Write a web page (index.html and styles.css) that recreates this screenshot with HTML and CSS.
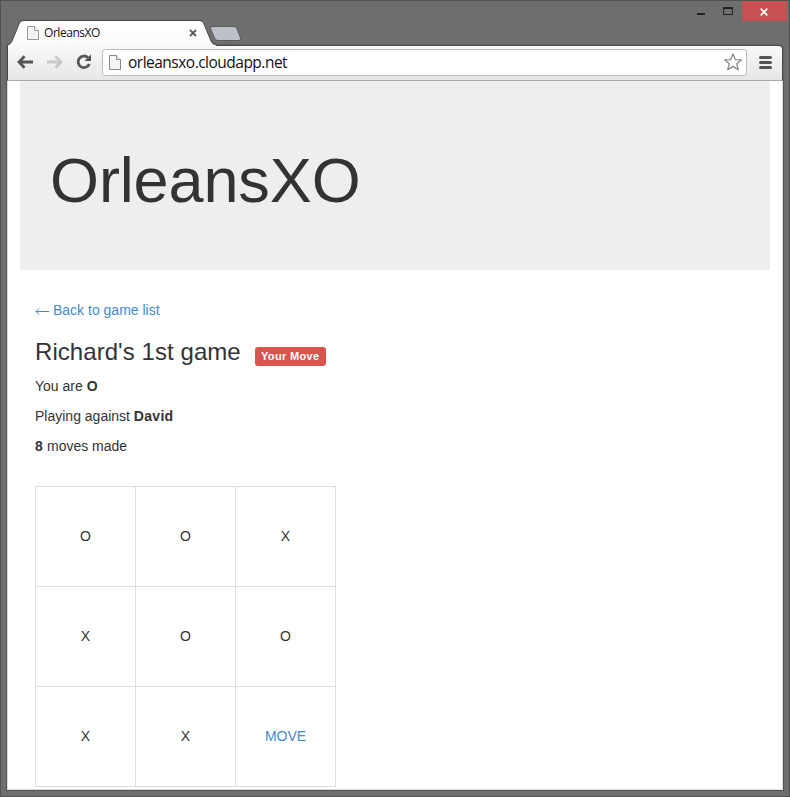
FILE: index.html
```html
<!DOCTYPE html>
<html lang="en">
<head>
<meta charset="utf-8">
<title>OrleansXO</title>
<link rel="stylesheet" href="styles.css">
</head>
<body>
<div class="window">
  <header class="titlebar">
    <div class="tab">
      <svg class="tab-shape" width="212" height="26" viewBox="0 0 212 26">
        <defs><linearGradient id="tabfill" x1="0" y1="0" x2="0" y2="1"><stop offset="0" stop-color="#fff"/><stop offset="1" stop-color="#f9f9f9"/></linearGradient></defs>
        <path d="M0 26V25Q3 24 4 21L11 4Q12 1 15 1H192Q195 1 196 4L203 21Q204.500 25 208 25V26Z" fill="url(#tabfill)"/>
        <path d="M0 25Q3 24 4 21L11 4Q12 .5 15 .5H192Q195 .5 196 4L203 21Q204.500 24.500 208 24.500" fill="none" stroke="#484848"/>
      </svg>
      <svg class="page-icon" width="12" height="14" viewBox="0 0 12 14"><path d="M.5.5H7.500L11.500 4.500V13.500H.5Z" fill="#f4f4f4" stroke="#999"/><path d="M7.500.5V4.500H11.500" fill="#fff" stroke="#999"/></svg>
      <span class="tab-title">OrleansXO</span>
      <svg class="tab-close" width="8" height="8" viewBox="0 0 8 8"><path d="M1 1L7 7M7 1L1 7" stroke="#5c5c5c" stroke-width="1.800"/></svg>
    </div>
    <svg class="new-tab" width="33" height="17" viewBox="0 0 33 17"><path d="M4 1.500H25Q27 1.500 28 3.500L31.500 13Q32 15.500 30 15.500H9Q6.500 15.500 5.500 13L1.500 3.500Q1 1.500 4 1.500Z" fill="#bbc0c8" stroke="#5c5c5c"/></svg>
    <div class="controls">
      <svg width="46" height="20" viewBox="0 0 46 20"><path d="M0 12H8V14H0Z" fill="#222"/><path d="M26.500 7.500H35.500V13.500H26.500Z" fill="none" stroke="#222"/><path d="M26 7H36" stroke="#222" stroke-width="2"/></svg>
      <div class="close"><svg width="8" height="8" viewBox="0 0 8 8"><path d="M.7.7L7.300 7.300M7.300.7L.7 7.300" stroke="#fff" stroke-width="1.800"/></svg></div>
    </div>
  </header>
  <nav class="toolbar">
    <svg class="nav-icons" width="80" height="20" viewBox="0 0 80 20">
      <path d="M7.500 4.300L2 10L7.500 15.700M2.500 10H16" fill="none" stroke="#555" stroke-width="2.800"/>
      <path d="M38.500 4.300L44 10L38.500 15.700M43.500 10H30" fill="none" stroke="#c8c8c8" stroke-width="2.800"/>
      <path d="M71 5.700A5.800 5.800 0 1 0 72.300 12" fill="none" stroke="#555" stroke-width="2.800"/><path d="M74 2.500V9H67.500Z" fill="#555"/>
    </svg>
    <div class="address">
      <svg class="address-icon" width="12" height="15" viewBox="0 0 12 15"><path d="M.5.5H7.500L11.500 4.500V14.500H.5Z" fill="#f4f4f4" stroke="#888"/><path d="M7.500.5V4.500H11.500" fill="#fff" stroke="#888"/></svg>
      <span class="url">orleansxo.cloudapp.net</span>
      <svg class="star" width="20" height="19" viewBox="0 0 20 19"><path d="M10 1L12.300 6.600L18.300 6.900L13.700 10.700L15.300 16.700L10 13.400L4.700 16.700L6.300 10.700L1.700 6.900L7.700 6.600Z" fill="#fff" stroke="#888" stroke-width="1.300" stroke-linejoin="round"/></svg>
    </div>
    <svg class="menu" width="13" height="13" viewBox="0 0 13 13"><path d="M1.500 1.500H11.500M1.500 6.500H11.500M1.500 11.500H11.500" stroke="#555" stroke-width="3" stroke-linecap="round"/></svg>
  </nav>
  <main class="page">
    <div class="jumbotron"><h1>OrleansXO</h1></div>
    <section class="game">
      <a class="back"><svg width="14" height="9" viewBox="0 0 14 9"><path d="M4 2.500L1 5.500L4 8.500M1 5.500H14" fill="none" stroke="#428bca"/></svg>Back to game list</a>
      <h3>Richard's 1st game <span class="label">Your Move</span></h3>
      <p>You are <b>O</b></p>
      <p>Playing against <b>David</b></p>
      <p><b>8</b> moves made</p>
      <table class="board">
        <tr><td>O</td><td>O</td><td>X</td></tr>
        <tr><td>X</td><td>O</td><td>O</td></tr>
        <tr><td>X</td><td>X</td><td><a>MOVE</a></td></tr>
      </table>
    </section>
  </main>
</div>
</body>
</html>
```
FILE: styles.css
```css
* { box-sizing: border-box; }
body { margin: 0; font: 14px/20px "Liberation Sans", Arial, sans-serif; color: #333; }
svg { display: block; flex: none; }
.window { width: 790px; height: 797px; background: #6e6e6e; border: 1px solid #515151; padding: 0 6px 6px; display: flex; flex-direction: column; overflow: hidden; }
.titlebar { height: 44px; flex: none; display: flex; align-items: flex-start; }
.tab { width: 202px; height: 25px; margin-top: 19px; position: relative; z-index: 1; display: flex; align-items: center; padding-left: 20px; }
.tab-shape { position: absolute; left: 1px; top: 0; }
.page-icon, .tab-title, .tab-close { position: relative; }
.tab-title { font: 12px/16px "Open Sans", sans-serif; letter-spacing: -.45px; color: #111; margin-left: 5px; width: 144px; }
.tab-close { margin-left: 1px; }
.new-tab { margin-top: 24px; }
.controls { margin-left: auto; display: flex; }
.controls > svg { margin-right: -1px; }
.close { width: 45px; height: 20px; margin-right: -4px; background: #c75050; display: flex; align-items: center; justify-content: center; padding: 1px 2px 0 0; }
.toolbar { height: 36px; flex: none; display: flex; align-items: center; padding: 0 10px 2px 9px; border: 1px solid #484848; border-bottom-color: #aaa; border-radius: 0 4px 0 0; background: linear-gradient(#f9f9f9, #e6e6e6); box-shadow: 0 0 2px #444; }
.address { width: 645px; height: 27px; margin: 1px 0 0 5px; border: 1px solid #bcbcbc; border-radius: 3px; background: #fff; display: flex; align-items: center; padding: 0 3px 0 6px; }
.url { font: 15.5px/20px "Open Sans", "Noto Sans", sans-serif; letter-spacing: -.51px; color: #111; margin: -2px 0 0 7px; }
.star { margin-left: auto; }
.menu { margin-left: 12px; }
.page { flex: 1; min-height: 0; background: #fff; border: solid #dcdcdc; border-width: 0 1px 1px; outline: 1px solid #555; padding: 0 12px; clip-path: inset(0 -1px -1px); }
.jumbotron { height: 189px; background: #eee; padding: 63px 30px 0; margin-bottom: 30px; }
h1 { margin: 0; font-size: 63px; line-height: 72px; font-weight: 400; letter-spacing: -.12px; }
.game { padding: 0 15px; }
.back { display: flex; align-items: center; gap: 4px; color: #428bca; }
h3 { margin: 19px 0 11px; font-size: 24px; line-height: 26px; font-weight: 400; letter-spacing: .06px; display: flex; }
.label { width: 71px; height: 19px; margin: 8px 0 -1px 14px; border-radius: 3px; background: #d9534f; color: #fff; text-align: center; font-size: 11px; line-height: 18px; font-weight: 700; letter-spacing: .35px; }
p { margin: 0 0 10px; }
p b { letter-spacing: .3px; }
a { color: #428bca; }
.board { margin-top: 30px; border-collapse: collapse; table-layout: fixed; width: 301px; }
.board td { height: 100px; padding: 0 0 2px; border: 1px solid #ddd; text-align: center; }
```
